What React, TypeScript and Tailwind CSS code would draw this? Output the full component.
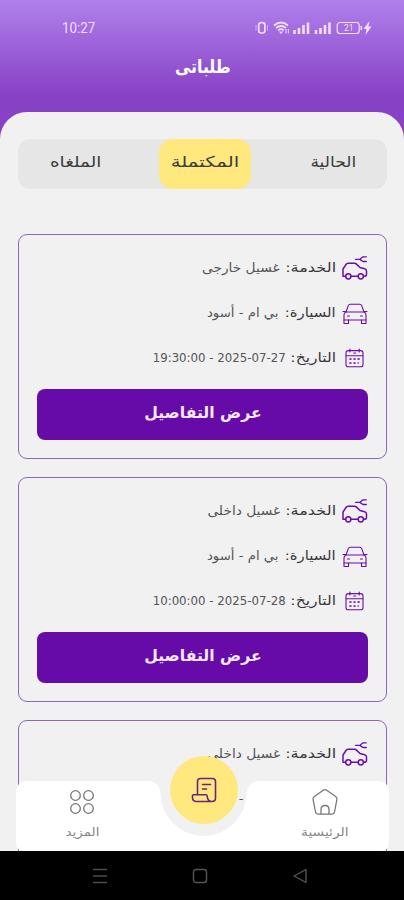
import type { ReactNode } from "react";

const tabs = [
  { label: "الحالية", className: "justify-start pr-[31px]", text: "origin-right scale-x-[1.14]" },
  { label: "المكتملة", className: "justify-center rounded-[14px] bg-[#ffe97f]", text: "scale-x-[1.32]" },
  { label: "الملغاه", className: "justify-end pl-[32px]", text: "origin-left scale-x-[1.22]" },
];

const orders = [
  { service: "غسيل خارجى", car: "بي ام - أسود", date: "2025-07-27 - 19:30:00" },
  { service: "غسيل داخلى", car: "بي ام - أسود", date: "2025-07-28 - 10:00:00" },
  { service: "غسيل داخلى", car: "بي ام - أسود", date: "" },
];

function ServiceIcon() {
  return (
    <svg className="mb-[1px]" width="26" height="26" viewBox="0 0 26 26" fill="none" stroke="#6a0dad" strokeWidth="1.5" strokeLinecap="round" strokeLinejoin="round">
      <path d="M3.500 21.300H1V14L4 9.500Q4.800 8.300 6 8.300h6.500q1.200 0 2 .8L18 12.500l4.600 1.200q1.900.4 1.900 2.300v3.500q0 1.800-2.500 1.800M9 21.300h7" />
      <circle cx="6.300" cy="21.300" r="2.600" />
      <circle cx="18.800" cy="21.300" r="2.600" />
      <path d="M13.500 4.300h4.500M24.300 1.800h-3.300L18.500 3.700v1.200L21 6.500h3.300" strokeWidth="1.300" />
    </svg>
  );
}

function CarIcon() {
  return (
    <svg width="26" height="22" viewBox="0 0 26 22" fill="none" stroke="#6a0dad" strokeWidth="1.1" strokeLinecap="round" strokeLinejoin="round">
      <path d="M4 9 6.300 2.600Q6.800 1.300 8.200 1.300h9.600q1.400 0 1.900 1.300L22 9M1 8.500h3M22 8.500h3" />
      <path d="M4 9h18q2 .8 2 3v5H2v-5q0-2.200 2-3Z" />
      <path d="M2 17v3.500h4.500V17M19.500 17v3.500H24V17M5.500 13h2M18.500 13h2" />
    </svg>
  );
}

function CalendarIcon() {
  return (
    <svg className="mb-[2px]" width="20" height="20" viewBox="0 0 20 20" fill="none" stroke="#6a0dad" strokeWidth="1.1" strokeLinecap="round">
      <rect x="1" y="2.600" width="17" height="16.200" rx="2.400" />
      <path d="M1.200 7.800h16.600M4.900 1v3M14.200 1v3M8.700 5h2" />
      <path d="M9.100 11h.9M13.100 11h1M5 15h.9M9.100 15h.9M5 11h.9" strokeWidth="1.7" />
      <path d="M13.100 15h.2" strokeWidth="1.4" />
    </svg>
  );
}

function StatusIcons() {
  return (
    <svg width="119" height="16" viewBox="0 0 119 16" fill="none" stroke="#f3dcff">
      <rect x="4.700" y="2.600" width="6.200" height="10.400" rx="2.400" strokeWidth="1.700" />
      <path d="M2 5v5.500M13.500 5v5.500" strokeWidth="1" strokeOpacity=".6" />
      <path d="M20 5.500q7-6 14 0M22 8q5-4 10 0M24.200 10.300q2.800-2.200 5.600 0" strokeWidth="1.700" />
      <path d="M25 11.500h4l-2 2.600z" fill="#f3dcff" stroke="none" />
      <path d="M32 9v4.500M34.300 9v4.500" strokeWidth="1" />
      <path d="M40.500 14v-4M45 14V8M49.500 14V5M54 14V2.500M62 14v-4M66.500 14V8M71 14V5M75.500 14V2.500" strokeWidth="2.600" />
      <rect x="83.200" y="2.500" width="22" height="11" rx="2.800" strokeWidth="1.200" />
      <path d="M107.300 6v4" strokeWidth="1.600" />
      <text x="90" y="11.200" fontSize="8.500" fontFamily="Roboto" fill="#f3dcff" stroke="none">21</text>
      <path d="m115.500 1-6 8h3l-1 6 6-8.500h-3z" fill="#f3dcff" stroke="none" />
    </svg>
  );
}

type RowProps = {
  icon: ReactNode;
  label: string;
  labelClass: string;
  valueClass: string;
  children: ReactNode;
};

function Row({ icon, label, labelClass, valueClass, children }: RowProps) {
  return (
    <div className="flex h-[45px] items-center">
      <div className="flex w-[26px] shrink-0 justify-center">{icon}</div>
      <div className="mr-[6px] flex items-baseline pb-[4px] whitespace-nowrap">
        <div className="w-[56px] shrink-0">
          <span className={`inline-block origin-right text-[13px] text-[#38383c] ${labelClass}`}>{label}:</span>
        </div>
        <span className={`inline-block origin-right text-[#55555a] ${valueClass}`}>{children}</span>
      </div>
    </div>
  );
}

function OrderCard({ order }: { order: (typeof orders)[number] }) {
  return (
    <div className="h-[225px] shrink-0 rounded-[9px] border border-[#8d68b8] px-[18px] pt-[11px]">
      <Row icon={<ServiceIcon />} label="الخدمة" labelClass="scale-x-[1.24]" valueClass="scale-x-[1.1] text-[12.5px]">
        {order.service}
      </Row>
      <Row icon={<CarIcon />} label="السيارة" labelClass="scale-x-[1.14]" valueClass="mr-[1px] scale-x-[1.06] text-[12.5px]">
        {order.car}
      </Row>
      {order.date && (
        <>
          <Row icon={<CalendarIcon />} label="التاريخ" labelClass="scale-x-[1.2]" valueClass="-mr-[6px] scale-x-[0.98] text-[12px]">
            {order.date}
          </Row>
          <button className="mt-[8px] h-[51px] w-full rounded-lg bg-[#660ba8] pb-[4px] text-[16px] font-bold text-[#f6e9ff]">
            <span className="inline-block scale-x-[0.98]">عرض التفاصيل</span>
          </button>
        </>
      )}
    </div>
  );
}

function BottomNav() {
  return (
    <nav className="absolute right-[15px] bottom-0 left-[16px] h-[70px]">
      <svg className="absolute inset-0" width="373" height="70" viewBox="0 0 373 70" fill="#fff">
        <path d="M12 0H131Q143 0 144.500 12A43 43 0 0 0 230.500 12Q232 0 244 0H361Q373 0 373 12V62Q373 70 363 70H10Q0 70 0 62V12Q0 0 12 0Z" />
      </svg>
      <div className="relative flex h-full justify-between pr-[29px] pl-[31px] text-[11.5px] text-[#858585]">
        <div className="flex w-[70px] flex-col items-center pt-[7px]">
          <svg width="28" height="28" viewBox="0 0 28 28" fill="none" stroke="#777" strokeWidth="1.3" strokeLinejoin="round">
            <path d="M12.300 2.200q1.700-1.200 3.400 0l9 6.300q1.600 1.200 1.200 3l-2.300 12q-.5 2.700-3 2.700H7.400q-2.500 0-3-2.700l-2.300-12q-.4-1.800 1.200-3z" />
            <path d="M10 26v-4.500q0-4 4-4t4 4V26" />
          </svg>
          <span className="mt-[8px] scale-x-[1.2]">الرئيسية</span>
        </div>
        <div className="flex w-[70px] flex-col items-center pt-[8px]">
          <svg width="26" height="26" viewBox="0 0 26 26" fill="none" stroke="#777" strokeWidth="1.300">
            <circle cx="6.500" cy="6.500" r="4.800" />
            <circle cx="19.500" cy="6.500" r="4.800" />
            <circle cx="6.500" cy="19.500" r="4.800" />
            <circle cx="19.500" cy="19.500" r="4.800" />
          </svg>
          <span className="mt-[9px] scale-x-[1.17]">المزيد</span>
        </div>
      </div>
      <button className="absolute -top-[25px] left-[154px] flex size-[68px] items-center justify-center rounded-full bg-[#ffe97f]">
        <svg width="26" height="26" viewBox="0 0 26 26" fill="none" stroke="#6b237d" strokeWidth="1.600" strokeLinecap="round" strokeLinejoin="round">
          <path d="M6.500 17.500V4.500q0-3 3-3h12q3 0 3 3V21q0 3.500-3.500 3.500H5.500q-4 0-4-4v-2q0-.8 1-.8h12.500q1 0 1.200 1.300.3 5.500 4.800 5.500M11.500 7.500h8M11.500 12h4" />
        </svg>
      </button>
    </nav>
  );
}

export default function App() {
  return (
    <div dir="rtl" className="flex h-[900px] w-[404px] flex-col overflow-hidden bg-[#8742c6] font-['DejaVu_Sans',sans-serif]">
      <header className="h-[112px] shrink-0 bg-linear-to-b from-[#b080eb] via-[#985bd5] via-50% to-[#8741c5] to-85%">
        <div dir="ltr" className="flex h-[56px] items-center justify-between pr-[31px] pl-[62px] text-[#f3dcff]">
          <span className="origin-left scale-x-[0.95] font-['Roboto',sans-serif] text-[14px]">10:27</span>
          <StatusIcons />
        </div>
        <h1 className="scale-x-[0.88] pl-[2px] text-center text-[18px] leading-[22px] font-bold text-white">طلباتى</h1>
      </header>

      <main className="relative flex min-h-0 flex-1 flex-col overflow-hidden rounded-t-[27px] bg-[#f1f1f1] pt-[27px] pr-[17px] pl-[18px]">
        <div className="grid h-[50px] shrink-0 grid-cols-[136px_92px_1fr] rounded-xl bg-[#e6e6e6] text-[15px] text-[#3c3c3c]">
          {tabs.map((tab) => (
            <button key={tab.label} className={`flex items-center pb-[3px] ${tab.className}`}>
              <span className={tab.text}>{tab.label}</span>
            </button>
          ))}
        </div>
        <div className="mt-[45px] flex flex-col gap-[18px]">
          {orders.map((order, i) => (
            <OrderCard key={i} order={order} />
          ))}
        </div>
        <BottomNav />
      </main>

      <footer dir="ltr" className="flex h-[49px] shrink-0 items-center justify-between bg-black pr-[96px] pl-[92px]">
        <svg width="16" height="16" viewBox="0 0 16 16" stroke="#4c4c4c" strokeWidth="1.400">
          <path d="M1 1.500h14M1 8h14M1 14.500h14" />
        </svg>
        <svg width="16" height="16" viewBox="0 0 16 16" fill="none" stroke="#555" strokeWidth="1.400">
          <rect x="1.500" y="1.500" width="13" height="13" rx="2.500" />
        </svg>
        <svg width="16" height="16" viewBox="0 0 16 16" fill="none" stroke="#555" strokeWidth="1.400" strokeLinejoin="round">
          <path d="M14 1.500v13L2 8z" />
        </svg>
      </footer>
    </div>
  );
}
